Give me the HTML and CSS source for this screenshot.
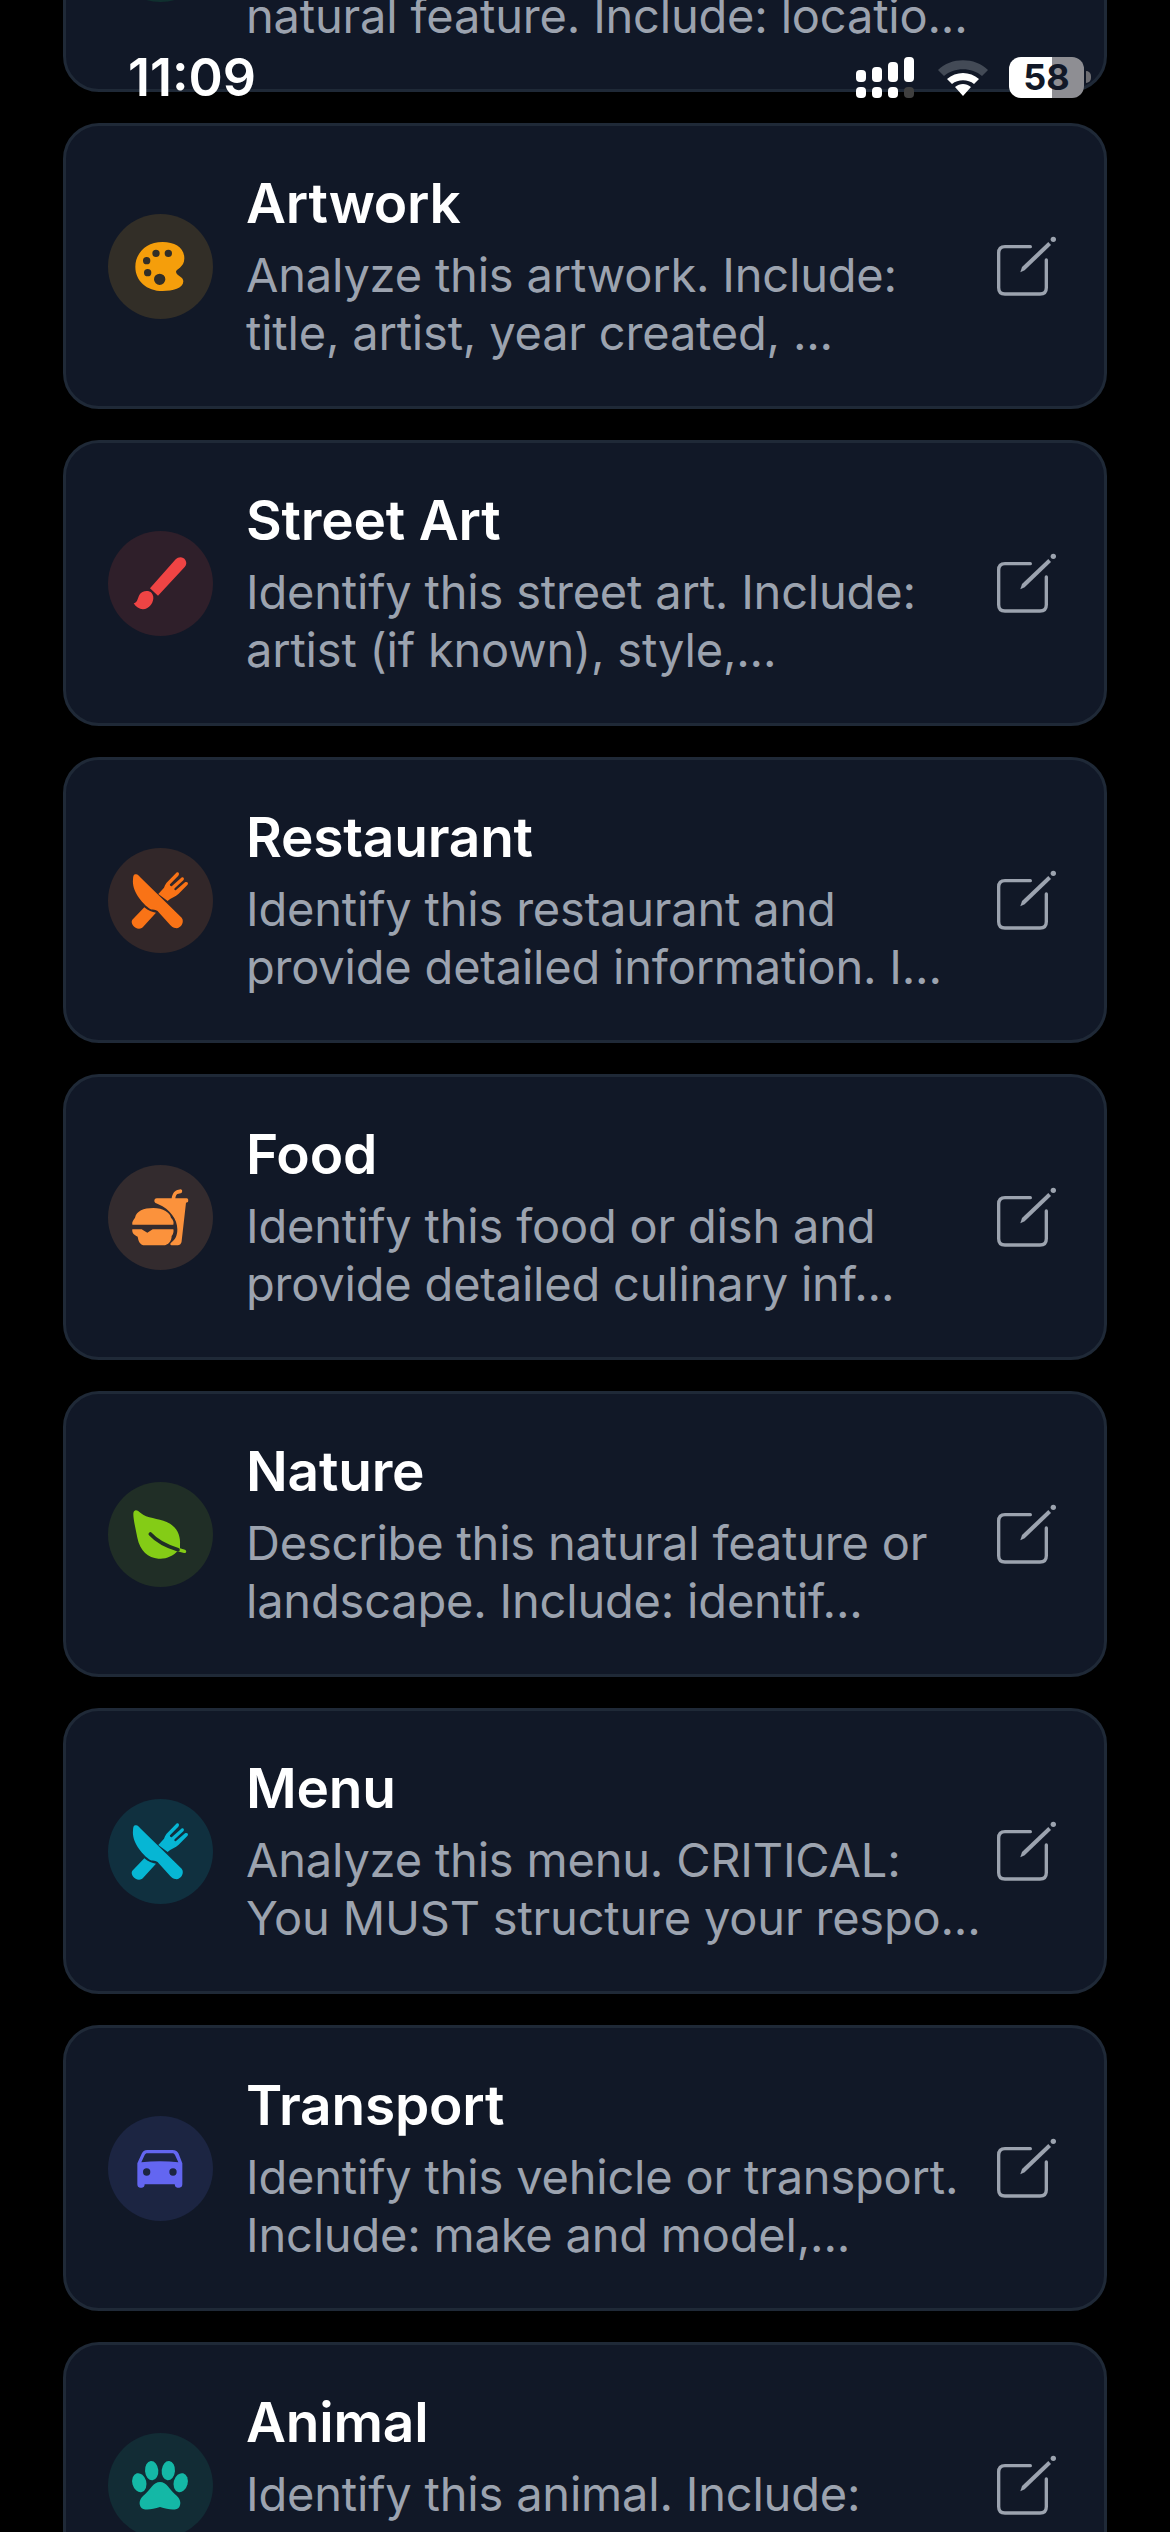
FILE: index.html
```html
<!DOCTYPE html>
<html lang="en">
<head>
<meta charset="utf-8">
<title>Prompts</title>
<link rel="stylesheet" href="styles.css">
</head>
<body>
<div class="status">
  <span class="time">11:09</span>
  <div class="status-icons">
    <svg class="signal" viewBox="0 0 58 42"><g class="s-on"><rect x="0" y="13" width="10" height="12" rx="4"/><rect x="16" y="10" width="10" height="15" rx="4"/><rect x="32" y="5" width="10" height="20" rx="4"/><rect x="48" y="0" width="10" height="25" rx="4"/><rect x="0" y="30" width="10" height="11" rx="4"/><rect x="16" y="30" width="10" height="11" rx="4"/><rect x="32" y="30" width="10" height="11" rx="4"/></g><rect class="s-off" x="48" y="30" width="10" height="11" rx="4"/></svg>
    <svg class="wifi" width="52" height="40" viewBox="0 0 52 40"><path class="w-off" d="M1 12C14 -1 38 -1 51 12L45 18C35 9 17 9 7 18Z"/><path class="w-on" d="M10 21C19 13 33 13 42 21L37 26C31 21 21 21 15 26ZM18 29C23 25 29 25 34 29L26 38Z"/></svg>
    <div class="battery"><span class="battery-num">58</span></div>
    <div class="battery-nub"></div>
  </div>
</div>

<main class="list">
  <article class="card">
    <div class="badge b-landmark"></div>
    <div class="body"><h2 class="title">Landmark</h2><p class="desc">Identify this landmark or<br>natural feature. Include: locatio...</p></div>
    <svg class="edit" viewBox="96 97 200 200"><path class="edit-box" d="M208 138H132Q113 138 113 157V261Q113 280 132 280H237Q256 280 256 261V178"/><path class="edit-pen" d="M178 215L183 199L262 124L270 133L191 209Z"/><circle class="edit-pen" cx="277" cy="116" r="8"/></svg>
  </article>

  <article class="card">
    <div class="badge b-art"><svg class="glyph" viewBox="54 39 315 315"><path fill-rule="evenodd" d="M218 123C165 123 136 160 136 197C136 240 170 270 218 270C248 270 280 262 280 241C280 226 258 224 258 212C258 204 283 200 283 172C283 140 255 123 218 123ZM187 157a11 11 0 1 0 22 0a11 11 0 1 0 -22 0ZM224 157a11 11 0 1 0 22 0a11 11 0 1 0 -22 0ZM159 179a11 11 0 1 0 22 0a11 11 0 1 0 -22 0ZM162 215a11 11 0 1 0 22 0a11 11 0 1 0 -22 0ZM192 235a17 17 0 1 0 34 0a17 17 0 1 0 -34 0Z"/></svg></div>
    <div class="body"><h2 class="title">Artwork</h2><p class="desc">Analyze this artwork. Include:<br>title, artist, year created, ...</p></div>
    <svg class="edit" viewBox="96 97 200 200"><path class="edit-box" d="M208 138H132Q113 138 113 157V261Q113 280 132 280H237Q256 280 256 261V178"/><path class="edit-pen" d="M178 215L183 199L262 124L270 133L191 209Z"/><circle class="edit-pen" cx="277" cy="116" r="8"/></svg>
  </article>

  <article class="card">
    <div class="badge b-street"><svg class="glyph" viewBox="54 60 315 315"><path d="M180 232L257 145C265 136 280 136 286 147C291 155 289 162 284 168L204 254ZM131 277C142 275 142 265 148 252C155 240 175 236 185 246C195 258 190 280 172 291C158 299 140 293 131 277Z"/></svg></div>
    <div class="body"><h2 class="title">Street Art</h2><p class="desc">Identify this street art. Include:<br>artist (if known), style,...</p></div>
    <svg class="edit" viewBox="96 97 200 200"><path class="edit-box" d="M208 138H132Q113 138 113 157V261Q113 280 132 280H237Q256 280 256 261V178"/><path class="edit-pen" d="M178 215L183 199L262 124L270 133L191 209Z"/><circle class="edit-pen" cx="277" cy="116" r="8"/></svg>
  </article>

  <article class="card">
    <div class="badge b-rest"><svg class="glyph" viewBox="54 51 315 315"><path d="M135 130C143 128 146 133 150 138L275 260C285 272 272 295 255 291C248 290 244 285 240 281L206 244C198 232 188 240 176 231C155 215 125 180 129 145C129 137 131 131 135 130ZM163 229C175 240 186 243 198 245L161 286C158 290 153 293 147 293C133 293 120 276 127 266ZM205 189L222 170C226 160 229 156 232 153L259 125C265 121 270 128 265 134L240 160C238 163 243 167 246 165L274 140C279 136 285 142 280 148L254 172C251 176 255 179 258 177L285 154C292 150 297 157 292 162L266 188C256 198 245 198 233 210Z"/></svg></div>
    <div class="body"><h2 class="title">Restaurant</h2><p class="desc">Identify this restaurant and<br>provide detailed information. I...</p></div>
    <svg class="edit" viewBox="96 97 200 200"><path class="edit-box" d="M208 138H132Q113 138 113 157V261Q113 280 132 280H237Q256 280 256 261V178"/><path class="edit-pen" d="M178 215L183 199L262 124L270 133L191 209Z"/><circle class="edit-pen" cx="277" cy="116" r="8"/></svg>
  </article>

  <article class="card">
    <div class="badge b-food"><svg class="glyph" viewBox="54 57 315 315"><path d="M193 165C193 159 197 157 200 157H245C247 145 252 135 262 132L272 130C278 131 278 140 272 142L262 144C258 146 257 152 256 157H290C294 157 296 162 294 168L288 170L275 285C274 295 268 298 262 298H245C240 297 240 293 243 290C255 282 262 270 262 250C262 220 240 190 205 175C198 172 193 170 193 165ZM127 236C125 228 130 222 135 215C140 195 160 186 190 186C220 186 240 200 243 215C250 222 252 228 250 236ZM127 250H155L172 260L188 250H250C252 255 250 265 245 270C245 285 235 298 220 298H165C150 298 145 285 143 272C132 268 125 260 127 250Z"/></svg></div>
    <div class="body"><h2 class="title">Food</h2><p class="desc">Identify this food or dish and<br>provide detailed culinary inf...</p></div>
    <svg class="edit" viewBox="96 97 200 200"><path class="edit-box" d="M208 138H132Q113 138 113 157V261Q113 280 132 280H237Q256 280 256 261V178"/><path class="edit-pen" d="M178 215L183 199L262 124L270 133L191 209Z"/><circle class="edit-pen" cx="277" cy="116" r="8"/></svg>
  </article>

  <article class="card">
    <div class="badge b-nature"><svg class="glyph" viewBox="54 63 315 315"><path d="M133 150C138 145 145 150 152 156C170 172 205 172 230 183C258 195 272 220 270 250L270 262L285 266C292 270 288 277 282 276L262 271C250 285 225 296 205 293C175 290 150 270 142 230C137 205 130 175 130 160C130 155 131 152 133 150Z"/><path class="vein" d="M181 219C200 240 230 256 264 266"/></svg></div>
    <div class="body"><h2 class="title">Nature</h2><p class="desc">Describe this natural feature or<br>landscape. Include: identif...</p></div>
    <svg class="edit" viewBox="96 97 200 200"><path class="edit-box" d="M208 138H132Q113 138 113 157V261Q113 280 132 280H237Q256 280 256 261V178"/><path class="edit-pen" d="M178 215L183 199L262 124L270 133L191 209Z"/><circle class="edit-pen" cx="277" cy="116" r="8"/></svg>
  </article>

  <article class="card">
    <div class="badge b-menu"><svg class="glyph" viewBox="54 54 315 315"><path d="M135 133C143 131 146 136 150 141L275 263C285 275 272 298 255 294C248 293 244 288 240 284L206 247C198 235 188 243 176 234C155 218 125 183 129 148C129 140 131 134 135 133ZM163 232C175 243 186 246 198 248L161 289C158 293 153 296 147 296C133 296 120 279 127 269ZM205 192L222 173C226 163 229 159 232 156L259 128C265 124 270 131 265 137L240 163C238 166 243 170 246 168L274 143C279 139 285 145 280 151L254 175C251 179 255 182 258 180L285 157C292 153 297 160 292 165L266 191C256 201 245 201 233 213Z"/></svg></div>
    <div class="body"><h2 class="title">Menu</h2><p class="desc">Analyze this menu. CRITICAL:<br>You MUST structure your respo...</p></div>
    <svg class="edit" viewBox="96 97 200 200"><path class="edit-box" d="M208 138H132Q113 138 113 157V261Q113 280 132 280H237Q256 280 256 261V178"/><path class="edit-pen" d="M178 215L183 199L262 124L270 133L191 209Z"/><circle class="edit-pen" cx="277" cy="116" r="8"/></svg>
  </article>

  <article class="card">
    <div class="badge b-car"><svg class="glyph" viewBox="54 45 315 315"><path fill-rule="evenodd" d="M172 147H247C257 147 263 152 266 158L277 187V250C277 256 274 260 268 260H262C257 260 255 256 254 250H164C164 256 161 260 156 260H150C145 260 142 256 142 250V187L155 158C158 152 163 147 172 147ZM172 157C168 157 166 159 164 162L154 184C190 180 230 180 265 184L255 162C253 159 251 157 247 157ZM159 213a11 11 0 1 0 22 0a11 11 0 1 0 -22 0ZM238 213a11 11 0 1 0 22 0a11 11 0 1 0 -22 0Z"/></svg></div>
    <div class="body"><h2 class="title">Transport</h2><p class="desc">Identify this vehicle or transport.<br>Include: make and model,...</p></div>
    <svg class="edit" viewBox="96 97 200 200"><path class="edit-box" d="M208 138H132Q113 138 113 157V261Q113 280 132 280H237Q256 280 256 261V178"/><path class="edit-pen" d="M178 215L183 199L262 124L270 133L191 209Z"/><circle class="edit-pen" cx="277" cy="116" r="8"/></svg>
  </article>

  <article class="card">
    <div class="badge b-paw"><svg class="glyph" viewBox="54 66 315 315"><ellipse cx="148" cy="215" rx="21" ry="29" transform="rotate(-15 148 215)"/><ellipse cx="185" cy="179" rx="20" ry="29" transform="rotate(-5 185 179)"/><ellipse cx="235" cy="179" rx="20" ry="29" transform="rotate(5 235 179)"/><ellipse cx="272" cy="215" rx="21" ry="29" transform="rotate(15 272 215)"/><path d="M210 213C230 213 238 235 255 250C270 262 275 275 268 288C260 300 235 296 210 288C185 296 160 300 152 288C145 275 150 262 165 250C182 235 190 213 210 213Z"/></svg></div>
    <div class="body"><h2 class="title">Animal</h2><p class="desc">Identify this animal. Include:<br>&nbsp;</p></div>
    <svg class="edit" viewBox="96 97 200 200"><path class="edit-box" d="M208 138H132Q113 138 113 157V261Q113 280 132 280H237Q256 280 256 261V178"/><path class="edit-pen" d="M178 215L183 199L262 124L270 133L191 209Z"/><circle class="edit-pen" cx="277" cy="116" r="8"/></svg>
  </article>
</main>
</body>
</html>
```
FILE: styles.css
```css
* { box-sizing: border-box; }
html, body { margin: 0; padding: 0; background: #000; }
body {
  width: 1170px;
  height: 2532px;
  overflow: hidden;
  position: relative;
  font-family: Inter, "Noto Sans", sans-serif;
}
.list {
  display: flex;
  flex-direction: column;
  gap: 31px;
  margin: -194px 63px 0;
}
.card {
  display: flex;
  align-items: center;
  flex: none;
  height: 286px;
  padding: 0 44px 0 42px;
  background: #111827;
  border: 3px solid #1f2937;
  border-radius: 36px;
}
.badge {
  flex: none;
  width: 105px;
  height: 105px;
  border-radius: 50%;
}
.glyph { display: block; width: 105px; height: 105px; fill: currentColor; }
.body { flex: 1; min-width: 0; margin-left: 33px; }
.title {
  margin: 0 0 10px;
  font-size: 55px;
  letter-spacing: -0.2px;
  line-height: 66px;
  font-weight: 600;
  color: #fff;
}
.desc {
  margin: 0;
  font-size: 47px;
  letter-spacing: -0.2px;
  line-height: 58px;
  font-weight: 400;
  color: #9ca3af;
  white-space: nowrap;
}
.edit { flex: none; width: 66.67px; height: 66.67px; }
.edit-box { fill: none; stroke: #9ca3af; stroke-width: 10; stroke-linecap: round; }
.edit-pen { fill: #9ca3af; }

.b-landmark { background: #10302f; }
.b-art { background: #322e27; color: #f59e0b; }
.b-street { background: #2f1f2a; color: #ef4444; }
.b-rest { background: #322729; color: #f97316; }
.b-food { background: #332b2e; color: #fb923c; }
.b-nature { background: #202e26; color: #84cc16; }
.b-menu { background: #10303f; color: #06b6d4; }
.b-car { background: #1c2542; color: #6366f1; }
.b-paw { background: #122c35; color: #14b8a6; }
.vein { fill: none; stroke: #202e26; stroke-width: 11; stroke-linecap: round; }

.status {
  position: absolute;
  top: 0;
  left: 0;
  width: 1170px;
  height: 110px;
  z-index: 2;
}
.time {
  position: absolute;
  left: 128px;
  top: 47px;
  font-size: 52px;
  line-height: 62px;
  font-weight: 600;
  color: #fff;
}
.status-icons {
  position: absolute;
  left: 856px;
  top: 57px;
  width: 240px;
  height: 42px;
  display: flex;
  align-items: flex-start;
}
.signal { flex: none; width: 58px; height: 42px; }
.s-on { fill: #fff; }
.s-off { fill: #3f3f3f; }
.wifi { flex: none; margin: 1px 0 0 23px; }
.w-off { fill: #434a56; }
.w-on { fill: #fff; }
.battery {
  flex: none;
  width: 75px;
  height: 41px;
  margin-left: 20px;
  border-radius: 12px;
  background: linear-gradient(to right, #fff 0 43px, #8e8e93 43px);
  display: flex;
  align-items: center;
  justify-content: center;
}
.battery-num {
  font-size: 36px;
  line-height: 41px;
  font-weight: 700;
  color: #111827;
}
.battery-nub {
  flex: none;
  width: 5px;
  height: 12px;
  margin: 14px 0 0 2px;
  border-radius: 0 6px 6px 0;
  background: #6e6e73;
}
```
